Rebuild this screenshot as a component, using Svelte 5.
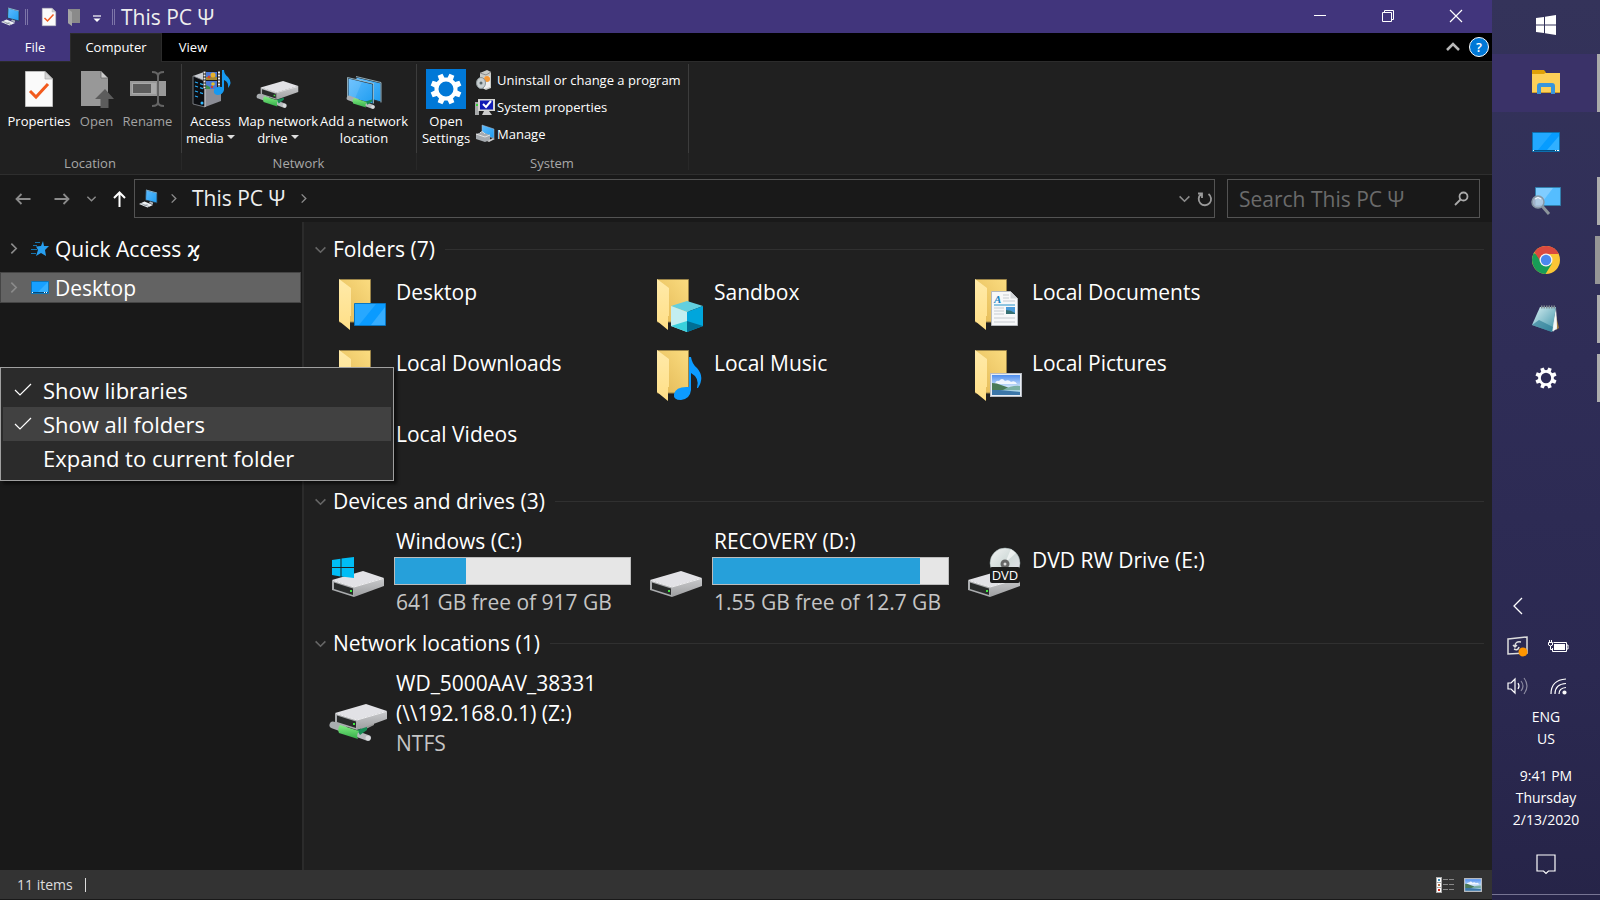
<script>
  const folders = [
    { name: 'Desktop', kind: 'desktop' },
    { name: 'Sandbox', kind: 'cube' },
    { name: 'Local Documents', kind: 'doc' },
    { name: 'Local Downloads', kind: 'plain' },
    { name: 'Local Music', kind: 'music' },
    { name: 'Local Pictures', kind: 'picture' },
    { name: 'Local Videos', kind: 'plain' }
  ];
  const drives = [
    { name: 'Windows (C:)', free: '641 GB free of 917 GB', used: 30, kind: 'windows' },
    { name: 'RECOVERY (D:)', free: '1.55 GB free of 12.7 GB', used: 88, kind: 'plain' },
    { name: 'DVD RW Drive (E:)', kind: 'dvd' }
  ];
  const menu = [
    { label: 'Show libraries', checked: true },
    { label: 'Show all folders', checked: true, hover: true },
    { label: 'Expand to current folder', checked: false }
  ];
  const apps = [
    { id: 'explorer', label: 'File Explorer', state: 'active' },
    { id: 'desktop', label: 'Desktop', state: '' },
    { id: 'finder', label: 'Screen search', state: 'running' },
    { id: 'chrome', label: 'Chrome', state: 'running multi' },
    { id: 'notepad', label: 'Notepad', state: 'running' },
    { id: 'settings', label: 'Settings', state: 'running' }
  ];
  const teeth = [0, 45, 90, 135, 180, 225, 270, 315];
</script>

{#snippet pc(w)}
  <svg width={w} height={w} viewBox="0 0 20 20" aria-hidden="true">
    <path d="M8 1l11 3v10L7.500 11z" fill="url(#screen)" stroke="#2b3a48" stroke-width=".8" />
    <path d="M8 1l11 3" stroke="#a9dcf8" stroke-width=".7" />
    <path d="M12 12.500l3 1v2l-4-1.500z" fill="#aab3bd" />
    <path d="M1 15l5.500-2.500L15 16l-5.500 2.500z" fill="#eef1f4" />
    <path d="M3 14.500l8 3M9.500 15.500l-3.500 1.500" stroke="#7e8791" stroke-width=".7" />
  </svg>
{/snippet}

{#snippet gear(w)}
  <svg width={w} height={w} viewBox="0 0 32 32" aria-hidden="true">
    {#each teeth as a}
      <path d="M13 6.500l.4-6h5.200l.4 6z" fill="#fff" transform={`rotate(${a + 22.5} 16 16)`} />
    {/each}
    <circle cx="16" cy="16" r="9.500" fill="none" stroke="#fff" stroke-width="4" />
  </svg>
{/snippet}

{#snippet chevron(dir, w)}
  <svg width={w} height={w} viewBox="0 0 12 12" fill="none" stroke="currentColor" stroke-width="1.500" aria-hidden="true">
    {#if dir === 'right'}<path d="M4 1.500L8.500 6 4 10.500" />
    {:else}<path d="M1.500 4L6 8.500 10.500 4" />{/if}
  </svg>
{/snippet}

{#snippet checkPage(w, h)}
  <svg width={w} height={h} viewBox="0 0 28 36" aria-hidden="true">
    <path d="M.5.5H20l7.500 7.500v27.500H.5z" fill="#fafafa" stroke="#bbb" />
    <path d="M20 .5V8h7.500z" fill="#d4d4d4" stroke="#aaa" stroke-width=".7" />
    <path d="M5 20l6 6L23 13" fill="none" stroke="#f25a1d" stroke-width="3" />
  </svg>
{/snippet}

{#snippet landscape()}
  <rect x=".5" y=".5" width="31" height="23" fill="#e8edf3" stroke="#b9bdc4" />
  <rect x="2" y="2" width="28" height="20" fill="url(#sky)" />
  <path d="M5 11q1-4 4-3 3-4 6 0 4-2 6 1 4-2 6 2z" fill="#fff" opacity=".85" />
  <path d="M2 10q5 0 9 2 7 2 12 5H2z" fill="#4a7a58" />
  <path d="M13 17q9-5 17-4v4z" fill="#7bb0a5" />
  <path d="M2 17h28v5H2z" fill="#3b76a8" /><path d="M10 17h20v2z" fill="#a9d2e2" />
{/snippet}

{#snippet driveShape()}
  <path d="M0 23l31-9 21 7-30 9z" fill="#e2e2e6" />
  <path d="M22 30l30-9v8L22 40z" fill="url(#side)" />
  <path d="M0 23l22 7v10L0 33z" fill="#aaacae" />
  <path d="M2 25.500l19 6v6.500L2 32z" fill="#292b2b" />
  <path d="M1 23.500l21 6.500 29-8.500" fill="none" stroke="#f1f1f3" stroke-width="1" />
  <rect x="18" y="33" width="2" height="2" fill="#3ee93e" />
{/snippet}

{#snippet cable()}
  <path d="M3 3l11 4" stroke="#a9adb0" stroke-width="7" stroke-linecap="round" />
  <path d="M27 12l11 4" stroke="#b7babd" stroke-width="6" stroke-linecap="round" />
  <path d="M27 8l10-3v3l-7 5z" fill="#178c55" />
  <path d="M10 3l19 6q-3 4-1 8L9 11q-2-4 1-8z" fill="url(#green)" />
  <circle cx="38" cy="16" r="2.500" fill="#d9dbdd" />
{/snippet}

<svg class="defs" width="0" height="0" aria-hidden="true">
  <defs>
    <linearGradient id="screen" x1="0" y1="0" x2="1" y2="1"><stop offset="0" stop-color="#5fbcff" /><stop offset="1" stop-color="#1f9df0" /></linearGradient>
    <linearGradient id="back" x1="0" y1="1" x2="1" y2="0"><stop offset="0" stop-color="#e2b855" /><stop offset="1" stop-color="#fbdc80" /></linearGradient>
    <linearGradient id="flap" x1="0" y1="0" x2="0" y2="1"><stop offset="0" stop-color="#ffeaa9" /><stop offset="1" stop-color="#ffdf87" /></linearGradient>
    <linearGradient id="side" x1="0" y1="0" x2="0" y2="1"><stop offset="0" stop-color="#c9cacc" /><stop offset="1" stop-color="#9d9ea0" /></linearGradient>
    <linearGradient id="green" x1="0" y1="0" x2="0" y2="1"><stop offset="0" stop-color="#82ee83" /><stop offset="1" stop-color="#34ad48" /></linearGradient>
    <linearGradient id="sky" x1="0" y1="0" x2="0" y2="1"><stop offset="0" stop-color="#4f8ff0" /><stop offset=".7" stop-color="#e5f2fb" /></linearGradient>
    <linearGradient id="pad" x1="0" y1="0" x2="1" y2="1"><stop offset="0" stop-color="#d9f0f3" /><stop offset="1" stop-color="#3d93a8" /></linearGradient>
    <linearGradient id="disc" x1="0" y1="0" x2="1" y2="1"><stop offset="0" stop-color="#f4f4f4" /><stop offset=".5" stop-color="#cfdad8" /><stop offset="1" stop-color="#e9e3ee" /></linearGradient>
  </defs>
</svg>

<div class="screen">
  <main class="window">
    <header class="titlebar">
      {@render pc(20)}
      <i class="sep"></i>
      <button class="quick first" aria-label="Properties">{@render checkPage(14, 18)}</button>
      <button class="quick" aria-label="New folder">
        <svg width="13" height="18" viewBox="0 0 13 18"><path d="M0 1h12v14H4v3L0 15z" fill="#8a8a8a" /><path d="M0 1l4 3v14l-4-3z" fill="#a5a5a5" /></svg>
      </button>
      <button class="quick last" aria-label="Customize toolbar">
        <svg width="8" height="8" viewBox="0 0 8 8"><path d="M0 1h8" stroke="#fff" stroke-width="1.200" /><path d="M.5 3.500h7L4 7z" fill="#fff" /></svg>
      </button>
      <i class="sep"></i>
      <h1>This PC Ψ</h1>
      <div class="controls">
        <button aria-label="Minimize"><svg width="12" height="12"><path d="M0 5.500h12" stroke="#fff" /></svg></button>
        <button aria-label="Restore"><svg width="12" height="12" fill="none" stroke="#fff"><path d="M.5 2.500h9v9h-9zM2.500 2.500v-2h9v9h-2" /></svg></button>
        <button aria-label="Close"><svg width="12" height="12" stroke="#fff" stroke-width="1.200"><path d="M0 0l12 12M12 0L0 12" /></svg></button>
      </div>
    </header>

    <nav class="tabs" aria-label="Ribbon tabs">
      <button class="file">File</button>
      <button class="current">Computer</button>
      <button class="view">View</button>
      <span class="grow"></span>
      <button class="collapse" aria-label="Collapse ribbon">
        <svg width="14" height="10" viewBox="0 0 14 10"><path d="M1 8l6-6 6 6" fill="none" stroke="#b8b8b8" stroke-width="2.500" /></svg>
      </button>
      <button class="help" aria-label="Help">?</button>
    </nav>

    <section class="ribbon">
      <div class="group location">
        <div class="tools">
          <button class="tool props">{@render checkPage(28, 36)}<span>Properties</span></button>
          <button class="tool open dim">
            <svg width="34" height="38" viewBox="0 0 34 38"><path d="M1 1h20l7 7v28H1z" fill="#989898" /><path d="M21 1v7h7z" fill="#ccc" stroke="#666" stroke-width=".7" /><path d="M20.500 38V29H15l10-10 9 10h-5.500v9z" fill="#5c5c5c" /></svg>
            <span>Open</span>
          </button>
          <button class="tool rename dim">
            <svg width="36" height="36" viewBox="0 0 36 36"><path d="M0 10h36v15H0z" fill="#999" /><path d="M2 12h24v11H2z" fill="#a9a9a9" /><path d="M3 13h18v9H3z" fill="#5d5d5d" /><path d="M22 1q6 0 6 4v26q0 4-6 4M34 1q-6 0-6 4M34 35q-6 0-6-4" fill="none" stroke="#646464" stroke-width="2" /></svg>
            <span>Rename</span>
          </button>
        </div>
        <h2>Location</h2>
      </div>
      <div class="group network">
        <div class="tools">
          <button class="tool access">
            <svg width="40" height="38" viewBox="0 0 40 38">
              <path d="M2 6l11-4 17 4-16 5z" fill="#c9ccd1" /><path d="M2 6l12 5v26L2 34z" fill="#0c0e12" stroke="#8b8f96" stroke-width=".8" /><path d="M14 11l16-5v25l-16 6z" fill="#8b8d95" /><path d="M14 11v26" stroke="#d0d2d6" />
              <path d="M4 12l3 1m2 .7l3 1M4 16l3 1m2 .7l3 1M4 21l3 1m2 .7l3 1M4 26l3 1" stroke="#28a8f0" stroke-width="1.300" /><circle cx="11" cy="33" r="1.500" fill="#31b8ff" />
              <path d="M12 1h18v18H12z" fill="#1b1b1b" /><path d="M15 2h11v8H15zM15 11h11v8H15z" fill="#4a78d6" /><path d="M15 7h11v3H15z" fill="#a58a35" /><circle cx="22" cy="5" r="2.500" fill="#e8b22c" /><circle cx="18" cy="7" r="1.500" fill="#d8452c" /><circle cx="22" cy="14" r="1.800" fill="#e3c22e" /><path d="M15 15l4 2v2h-4z" fill="#3c8f46" /><circle cx="21" cy="17" r="1.200" fill="#d23f2d" />
              <path d="M13.500 1.500v17M28 1.500v17" stroke="#eee" stroke-width="2" stroke-dasharray="2 1" />
              <path d="M31 0h2q0 4 4 7 5 6 0 11 1-6-4-8v10q-1 5-7 5-4-1-3-5 2-4 8-3z" fill="#1699f0" />
            </svg>
            <span>Access<br />media <b class="caret"></b></span>
          </button>
          <button class="tool map">
            <svg width="42" height="38" viewBox="0 0 58 50"><g transform="translate(5 0)">{@render driveShape()}</g><g transform="translate(0 32)">{@render cable()}</g></svg>
            <span>Map network<br />drive <b class="caret"></b></span>
          </button>
          <button class="tool add">
            <svg width="36" height="38" viewBox="0 0 36 38"><path d="M10 7l25 6v19l-25-7z" fill="url(#screen)" stroke="#262f36" /><path d="M10 6.500l25 6v20" fill="none" stroke="#a9cad8" stroke-width=".8" /><path d="M2 8l25 6v20L2 27z" fill="url(#screen)" stroke="#262f36" /><path d="M1.500 27V7.500l26 6v20" fill="none" stroke="#a9cad8" stroke-width=".8" /><path d="M16 12L9 28.500 2.500 27V8.500z" fill="#fff" opacity=".12" /><g transform="translate(1 26) scale(.68)">{@render cable()}</g></svg>
            <span>Add a network<br />location</span>
          </button>
        </div>
        <h2>Network</h2>
      </div>
      <div class="group system">
        <div class="tools">
          <button class="tool settings"><i class="tile">{@render gear(32)}</i><span>Open<br />Settings</span></button>
          <div class="links">
            <button>
              <svg width="20" height="20" viewBox="0 0 20 20"><path d="M5 3l7-3 4 2v16l-5 2-6-3z" fill="#c9cbc7" /><path d="M5 3l6 2 5-3" fill="none" stroke="#8b8b8b" /><path d="M9 7l6-1v11l-6 2z" fill="#eee" /><circle cx="12" cy="9" r="3" fill="#f49836" /><ellipse cx="6" cy="13" rx="4.500" ry="5.500" fill="#c7ced0" stroke="#8a9496" /><circle cx="6" cy="13" r="1.500" fill="#596669" /></svg>
              Uninstall or change a program
            </button>
            <button>
              <svg width="20" height="20" viewBox="0 0 20 20"><path d="M0 5h4v13H0z" fill="#a8aaab" /><path d="M1 8h3" stroke="#36d536" stroke-width="2" /><path d="M3 2h17v12H3z" fill="#d6d6d2" /><path d="M5 3.500h13v9H5z" fill="#101bb5" /><path d="M9 14h5l3 4H7z" fill="#ccc" /><path d="M8 7l3 3 5-6" fill="none" stroke="#fff" stroke-width="2" /></svg>
              System properties
            </button>
            <button>
              <svg width="20" height="20" viewBox="0 0 20 20"><path d="M7 1l12 4v9L7 11z" fill="url(#screen)" stroke="#abc" stroke-width=".5" /><path d="M1 10l6-2 8 3v5l-5 2-9-3z" fill="#a6abb0" /><path d="M1 10l9 3 5-2" stroke="#e4e4e4" fill="none" /><path d="M5 9q2-3 5 1" stroke="#ddd" fill="none" /><path d="M12 17l6-3 2 1-6 3z" fill="#ccc" /></svg>
              Manage
            </button>
          </div>
        </div>
        <h2>System</h2>
      </div>
    </section>

    <div class="address">
      <div class="history">
        <button aria-label="Back"><svg width="16" height="12" viewBox="0 0 16 12" fill="none" stroke="#8b8b8b" stroke-width="1.800"><path d="M15.500 6H1.500M6.500 1l-5 5 5 5" /></svg></button>
        <button class="forward" aria-label="Forward"><svg width="16" height="12" viewBox="0 0 16 12" fill="none" stroke="#8b8b8b" stroke-width="1.800"><path d="M.5 6h14M9.500 1l5 5-5 5" /></svg></button>
        <button aria-label="Recent locations">{@render chevron('down', 11)}</button>
        <button aria-label="Up"><svg width="13" height="16" viewBox="0 0 13 16" fill="none" stroke="#fff" stroke-width="2"><path d="M6.500 16V1.500M1 7l5.500-5.500L12 7" /></svg></button>
      </div>
      <div class="path">
        {@render pc(20)}
        <span class="crumb">{@render chevron('right', 11)}</span>
        <button class="here">This PC Ψ</button>
        {@render chevron('right', 11)}
        <span class="grow"></span>
        <button aria-label="Previous locations">{@render chevron('down', 13)}</button>
        <button class="refresh" aria-label="Refresh"><svg width="16" height="16" viewBox="0 0 16 16" fill="none" stroke="#9a9a9a" stroke-width="1.800"><path d="M11.500 3A6.200 6.200 0 1 1 4 3.200M1 2.500h4v4.500" /></svg></button>
      </div>
      <label class="search">
        <input type="search" placeholder="Search This PC Ψ" aria-label="Search This PC" />
        <svg width="15" height="15" viewBox="0 0 15 15" fill="none" stroke="#aaa" stroke-width="1.800"><circle cx="9.500" cy="5.500" r="4" /><path d="M6.500 8.500L1 14" /></svg>
      </label>
    </div>

    <div class="body">
      <aside>
        <button class="node">
          {@render chevron('right', 13)}
          <svg width="20" height="18" viewBox="0 0 20 18"><path d="M13 1l1 5h5l-4 4 1 6-5-3-5 3 2-6-2-3.500 5-.5z" fill="#279ff0" /><path d="M5 2.500h5M3 5.500h4M1 9.500h6M1 13.500h5" stroke="#1673ad" /></svg>
          <span>Quick Access <b class="kai">ϗ</b></span>
        </button>
        <button class="node selected">
          {@render chevron('right', 13)}
          <svg width="20" height="18" viewBox="0 0 20 18"><path d="M1.500 2.500h17v12h-17z" fill="#17a0ff" stroke="#0d76b8" /><path d="M18 3v11H7z" fill="#35b0ff" /><path d="M2 13.500h16" stroke="#064a78" /><path d="M2 13.500h1M14 13.500h1M16 13.500h1" stroke="#fff" /></svg>
          <span>Desktop</span>
        </button>
        <div class="menu" role="menu">
          {#each menu as item}
            <button role="menuitemcheckbox" aria-checked={item.checked} class:hover={item.hover}>
              <svg width="18" height="14" viewBox="0 0 18 14">{#if item.checked}<path d="M1 7l5 5L17 1" fill="none" stroke="#fff" stroke-width="1.200" />{/if}</svg>
              {item.label}
            </button>
          {/each}
        </div>
      </aside>

      <div class="content">
        <h3>{@render chevron('down', 13)}<span>Folders (7)</span></h3>
        <div class="grid">
          {#each folders as f}
            <a class="item folder" href="#{f.kind}">
              <svg width="50" height="54" viewBox="0 0 50 54" aria-hidden="true">
                <path d="M.5.500h31V43H.5z" fill="url(#back)" stroke="#9b8448" />
                <path d="M0 0l12 9v28h-1v14L0 42z" fill="url(#flap)" />
                {#if f.kind === 'desktop'}
                  <path d="M15.500 24.500h31v22h-31z" fill="#0a9bff" stroke="#0875c1" /><path d="M16 25h21L20 46h-4z" fill="#27a8ff" /><path d="M46 28v18H32z" fill="#35adff" />
                {:else if f.kind === 'cube'}
                  <path d="M30 22l16 5-16 6-16-6z" fill="#62cfdf" /><path d="M14 27l16 6v20l-16-6z" fill="#c3eef0" /><path d="M46 27l-16 6v20l16-6z" fill="#00a6dc" /><path d="M14 47l16-5v11z" fill="#3ad0dc" /><path d="M46 47l-16-5v11z" fill="#016f94" />
                {:else if f.kind === 'doc'}
                  <path d="M16.500 12.500h19l7 7v27h-26z" fill="#f7f8f9" stroke="#b5b9bd" /><path d="M35.500 12.500v7h7z" fill="#d3d6d9" />
                  <text x="19" y="24" class="docletter">A</text>
                  <path d="M28 16h6M28 19h6M28 22h12M19 29h10M19 32h10M19 35h10M19 39h21M19 43h21" stroke="#c6cbd0" /><path d="M19 26h21" stroke="#2792c8" /><path d="M31 28h9v7h-9z" fill="#4b9bd9" /><path d="M31 31q5 0 9 3v1h-9z" fill="#356f72" />
                {:else if f.kind === 'music'}
                  <path d="M32 7h2q1 7 6 11 8 9 1 20h-1q3-10-6-15v17q-1 9-10 10-8 0-7-6 2-8 15-7z" fill="#0c9bff" />
                {:else if f.kind === 'picture'}
                  <g transform="translate(15 23)">{@render landscape()}</g>
                {/if}
              </svg>
              <span>{f.name}</span>
            </a>
          {/each}
        </div>

        <h3>{@render chevron('down', 13)}<span>Devices and drives (3)</span></h3>
        <div class="grid">
          {#each drives as d}
            <a class="item drive" class:single={!d.free} href="#{d.kind}">
              <svg width="54" height="42" viewBox="0 0 54 42" aria-hidden="true">
                {@render driveShape()}
                {#if d.kind === 'windows'}
                  <path d="M0 3l8.500-1.200V10H0zM9.500 1.500L22 0v10H9.500zM0 11h8.500v8.500L0 18zM9.500 11H22v10L9.500 19.500z" fill="#00bdf5" />
                {:else if d.kind === 'dvd'}
                  <circle cx="37" cy="6" r="15" fill="url(#disc)" stroke="#9aa" stroke-width=".5" /><path d="M37 6l6-14 5 4z" fill="#fff" opacity=".6" /><circle cx="37" cy="7" r="4.500" fill="#666" /><circle cx="37" cy="7" r="1.500" fill="#ddd" />
                  <rect x="22" y="10" width="30" height="16" rx="2" fill="#1c1c1c" /><text x="37" y="23" class="dvd">DVD</text>
                {/if}
              </svg>
              <div>
                <span>{d.name}</span>
                {#if d.free}
                  <div class="meter"><i style:width="{d.used}%"></i></div>
                  <small>{d.free}</small>
                {/if}
              </div>
            </a>
          {/each}
        </div>

        <h3 class="net">{@render chevron('down', 13)}<span>Network locations (1)</span></h3>
        <div class="grid">
          <a class="item share" href="#share">
            <svg width="58" height="44" viewBox="0 0 58 44" aria-hidden="true"><path d="M28 20l16-4v6l-12 6z" fill="#999" /><g transform="translate(5 -13)">{@render driveShape()}</g><g transform="translate(0 19)">{@render cable()}</g></svg>
            <div><span>WD_5000AAV_38331</span><span>(\\192.168.0.1) (Z:)</span><small>NTFS</small></div>
          </a>
        </div>
      </div>
    </div>

    <footer>
      <span>11 items</span><i></i>
      <span class="grow"></span>
      <button aria-label="Details view">
        <svg width="18" height="16" viewBox="0 0 18 16"><path d="M0 0h6v16H0z" fill="#aaa" /><path d="M1 1h4v4H1zM1 6h4v4H1zM1 11h4v4H1z" fill="#fff" /><path d="M2 2h2v2H2z" fill="#3d8db5" /><path d="M2 7h2v2H2z" fill="#b37147" /><path d="M2 12h2v2H2z" fill="#d62a18" /><path d="M7 2.500h5m1 0h5M7 7.500h5m1 0h5M7 12.500h5m1 0h5" stroke="#888" /></svg>
      </button>
      <button aria-label="Large icons view"><svg width="18" height="14" viewBox="0 0 32 24" preserveAspectRatio="none">{@render landscape()}</svg></button>
    </footer>
  </main>

  <aside class="taskbar">
    <button class="start" aria-label="Start">
      <svg width="20" height="20" viewBox="0 0 20 20"><path d="M0 3l8-1v7.500H0zM9 1.800L20 0v9.500H9zM0 10.500h8V18l-8-1zM9 10.500h11V20L9 18.200z" fill="#fff" /></svg>
    </button>
    {#each apps as app}
      <button class="app {app.state}" aria-label={app.label}>
        {#if app.id === 'explorer'}
          <svg width="28" height="24" viewBox="0 0 28 24"><path d="M0 3h28v20H0z" fill="#fdcf58" /><path d="M0 0h12l2 2.500L12 4H0z" fill="#e0a008" /><path d="M0 22.500h28" stroke="#cf9f2b" /><path d="M5 24V16q0-3 3-3h12q3 0 3 3v8h-4v-7H9v7z" fill="#3995dd" /></svg>
        {:else if app.id === 'desktop'}
          <svg width="28" height="20" viewBox="0 0 28 20"><path d="M.5.500h27v19H.500z" fill="#079cff" stroke="#0d6fae" /><path d="M1 1h19L6 18H1z" fill="#22a8ff" /><path d="M27 4v14H15z" fill="#30b0ff" /><path d="M1 18.500h26" stroke="#064f83" /><path d="M1 18.500h1M23 18.500h1m1 0h2" stroke="#fff" /></svg>
        {:else if app.id === 'finder'}
          <svg width="30" height="28" viewBox="0 0 30 28"><path d="M4.500.500h25v18h-25z" fill="#55bdff" stroke="#327fac" /><path d="M5 1h17L9 18H5z" fill="#80cdff" /><path d="M11 19l7 8" stroke="#8c949b" stroke-width="3" /><circle cx="7" cy="15" r="6" fill="#b8c9dd" fill-opacity=".85" stroke="#8797a4" stroke-width="1.500" /><path d="M4 12q3-3 6 0" stroke="#fff" fill="none" /></svg>
        {:else if app.id === 'chrome'}
          <svg width="28" height="28" viewBox="0 0 28 28"><circle cx="14" cy="14" r="14" fill="#fbc635" /><path d="M1.900 7A14 14 0 0 0 13.500 28L20 17.500l-7 1.500z" fill="#189d57" /><path d="M1.900 7L9 18l4 3 3-6z" fill="#189d57" /><path d="M2.400 6.200L8.300 15 14 8h12.700A14 14 0 0 0 2.400 6.200z" fill="#db4a3f" /><circle cx="14" cy="14" r="6.500" fill="#f4f4f4" /><circle cx="14" cy="14" r="5.200" fill="#4a88ee" /></svg>
        {:else if app.id === 'notepad'}
          <svg width="28" height="28" viewBox="0 0 28 28"><path d="M22 2l5 21-3 2z" fill="#a17a3d" /><path d="M24 3l1 21-6 3z" fill="#dfe9e8" /><path d="M8 2h16l-4 25L0 20z" fill="url(#pad)" /><path d="M0 20l7-5 14 7-1 5z" fill="#277892" opacity=".6" /><path d="M9 2h15" stroke="#808b91" stroke-width="3" stroke-dasharray="1.500 1" /><path d="M24 5l-3 22 4-5z" fill="#fff" opacity=".7" /></svg>
        {:else}
          {@render gear(22)}
        {/if}
      </button>
    {/each}
    <span class="grow"></span>
    <div class="tray">
      <button aria-label="Show hidden icons"><svg width="10" height="18" viewBox="0 0 10 18" fill="none" stroke="#fff" stroke-width="1.300"><path d="M9 1L1 9l8 8" /></svg></button>
      <span></span>
      <button aria-label="Updates"><svg width="22" height="20" viewBox="0 0 22 20" fill="none" stroke="#ddd" stroke-width="1.500"><path d="M1 3l19-2v16L1 18z" /><path d="M14 6q-6-1-6 4M6 9l2 2 2-2M7 13q4 2 5-2" /><circle cx="16" cy="16" r="4.500" fill="#ff9500" stroke="none" /></svg></button>
      <button aria-label="Battery"><svg width="20" height="13" viewBox="0 0 20 13"><path d="M5.500 2.500h13v9h-14V8M18.500 5H20v4h-1.500" fill="none" stroke="#fff" /><path d="M6 4h11v6H6z" fill="#fff" /><path d="M.5 2.500h4V5q-2 2-4 0zM1.500 0v2.500M3.500 0v2.500M2.500 6v3.500h2" fill="none" stroke="#fff" /></svg></button>
      <button aria-label="Volume"><svg width="22" height="18" viewBox="0 0 22 18" fill="none" stroke="#fff" stroke-width="1.200"><path d="M1 6h3l4-4v14l-4-4H1zM11 6q2 3 0 6" /><path d="M14 4q4 5 0 10M17 1q6 8 0 16" opacity=".45" /></svg></button>
      <button aria-label="Wi-Fi"><svg width="17" height="17" viewBox="0 0 17 17" fill="none" stroke="#fff" stroke-width="1.200"><path d="M1 16Q1 2 16 1M5 16Q5 6 16 5.500M9 16q0-6 7-6.500" /><circle cx="14.500" cy="14.500" r="1.500" fill="#fff" /></svg></button>
    </div>
    <button class="lang">ENG<br />US</button>
    <button class="clock">9:41 PM<br />Thursday<br />2/13/2020</button>
    <button class="notify" aria-label="Notifications"><svg width="20" height="21" viewBox="0 0 20 21" fill="none" stroke="#fff" stroke-width="1.200"><path d="M1 1h18v16h-6.500L10 19.500 7.500 17H1z" /></svg></button>
  </aside>
</div>

<style>
  :global(body) { margin: 0; background: #202020; }
  .screen {
    display: grid; grid-template-columns: minmax(0, 1fr) 108px; min-height: 100vh;
    font-family: "Open Sans", "Noto Sans", "DejaVu Sans", sans-serif; font-size: 13px; color: #fff;
  }
  .defs { position: absolute; }
  button { font: inherit; color: inherit; background: none; border: 0; padding: 0; margin: 0; }
  svg { flex: none; overflow: visible; }
  h1, h2, h3 { margin: 0; font-weight: 400; }
  .grow { flex: 1; }
  .window { display: flex; flex-direction: column; min-width: 0; background: #191919; }

  .titlebar { display: flex; align-items: center; height: 33px; background: #41357c; }
  .sep { width: 1px; height: 16px; margin-left: 5px; border: 1px solid #7d75a8; border-width: 0 1px; }
  .quick { display: flex; margin-left: 12px; }
  .quick.first { margin-left: 14px; }
  .quick.last { margin: 4px 6px 0 12px; }
  h1 { margin-left: 6px; font-size: 21px; line-height: 30px; color: #eee; }
  .controls { display: flex; margin: 0 2px 2px auto; height: 31px; }
  .controls button { width: 68px; display: grid; place-items: center; }

  .tabs { display: flex; align-items: stretch; height: 28px; background: #000; border-bottom: 1px solid #2b2b2b; }
  .tabs .file { width: 70px; background: #41357c; }
  .tabs .current { width: 92px; margin-bottom: -1px; padding-bottom: 2px; background: #202020; border: 1px solid #2b2b2b; border-bottom: 0; box-sizing: border-box; }
  .tabs .view { width: 62px; }
  .tabs .collapse { margin-right: 9px; }
  .tabs .help { align-self: center; width: 20px; height: 20px; margin-right: 3px; border-radius: 50%; border: 1px solid #fff; background: #0078d7; font-weight: 600; line-height: 17px; }

  .ribbon { display: flex; height: 112px; background: #202020; border-bottom: 1px solid #2e2e2e; }
  .group { display: flex; flex-direction: column; padding-top: 6px; box-sizing: border-box; margin-top: 2px; background: linear-gradient(#3c3c3c 89px, #282828 89px 106px, transparent 106px) right / 1px 100% no-repeat; }
  .location { width: 182px; }
  .network { width: 235px; }
  .system { width: 272px; }
  .tools { display: flex; flex: 1; min-height: 0; }
  .tool { display: flex; flex-direction: column; align-items: center; align-self: flex-start; line-height: 17px; white-space: nowrap; }
  .tool > :global(svg) { height: 38px; }
  .tool span { margin-top: 5px; }
  .dim { color: #a3a3a3; }
  .props { width: 78px; }
  .open { width: 37px; }
  .rename { width: 65px; }
  .access { width: 57px; }
  .map { width: 78px; }
  .add { width: 94px; }
  .settings { width: 58px; }
  .tile { display: grid; place-items: center; width: 40px; height: 40px; margin: -1px 0; background: #0078d7; }
  .caret { display: inline-block; border: 4px solid transparent; border-top-color: #ddd; border-bottom: 0; vertical-align: 4px; }
  .ribbon h2 { text-align: center; font-size: 13px; line-height: 21px; padding-right: 2px; color: #a8a8a8; }
  .links { display: flex; flex-direction: column; margin-top: -4px; }
  .links button { display: flex; align-items: center; gap: 2px; height: 27px; white-space: nowrap; }

  .address { display: flex; align-items: stretch; gap: 10px; padding: 4px 12px 4px 0; height: 39px; color: #8b8b8b; }
  .history { display: flex; align-items: center; gap: 16px; padding-left: 15px; width: 109px; }
  .history .forward { margin-left: 7px; }
  .history button, .path button { display: flex; }
  .path { flex: 1; display: flex; align-items: center; border: 1px solid #535353; padding: 0 1px 0 3px; margin-right: 2px; }
  .crumb { display: flex; margin: 0 13px 0 10px; }
  .path .here { font-size: 21px; line-height: 30px; padding-bottom: 2px; margin-right: 13px; color: #eee; }
  .refresh { margin-left: 6px; }
  .search { display: flex; align-items: center; width: 251px; border: 1px solid #535353; }
  .search input { flex: 1; min-width: 0; padding: 0 0 0 11px; border: 0; outline: 0; background: none; font: inherit; font-size: 21px; color: #fff; }
  .search input::placeholder { color: #6b6b6b; opacity: 1; }
  .search svg { margin-right: 10px; }

  .body { flex: 1; display: grid; grid-template-columns: 302px minmax(0, 1fr); font-size: 21px; }
  .body > aside { position: relative; padding-top: 11px; }
  .node { display: flex; align-items: center; width: 301px; height: 31px; padding-left: 6px; box-sizing: border-box; border: 1px solid transparent; color: #fff; line-height: 28px; white-space: nowrap; margin-bottom: 8px; }
  .node > :global(svg:first-child) { color: #8b8b8b; margin-right: 10px; }
  .node span { margin-left: 5px; }
  .kai { font-family: "DejaVu Sans", sans-serif; font-weight: 400; line-height: 20px; }
  .node.selected { background: #636363; border-color: #454545; }
  .menu { position: absolute; z-index: 2; top: 145px; left: 0; width: 394px; box-sizing: border-box; padding: 5px 2px; background: #2b2b2b; border: 1px solid #a0a0a0; box-shadow: 3px 3px 3px #0008; font-size: 22px; }
  .menu button { display: flex; align-items: center; gap: 11px; width: 100%; height: 34px; padding-left: 11px; }
  .menu .hover { background: #414141; }

  .content { background: #202020; border-left: 2px solid #2b2b2b; padding: 11px 8px 0 10px; }
  h3 { display: flex; align-items: center; height: 32px; margin-bottom: 7px; font-size: 21px; color: #fff; }
  h3 > :global(svg) { color: #666; }
  h3 span { margin: 0 10px 0 6px; padding-bottom: 1px; }
  h3::after { content: ""; flex: 1; height: 1px; background: #303030; }
  h3.net { margin-top: 10px; }
  .grid { display: grid; grid-template-columns: repeat(auto-fill, 318px); padding-left: 16px; }
  .item { display: flex; color: #fff; text-decoration: none; line-height: 30px; }
  .item span, .item small { display: block; white-space: nowrap; }
  .item small { font-size: inherit; color: #c5c5c5; }
  .folder { height: 66px; padding: 5px 0 0 9px; }
  .folder svg { margin-top: 2px; }
  .folder span { margin-left: 7px; }
  .drive { padding: 2px 0 0 2px; }
  .drive > svg { margin-top: 31px; }
  .drive > div { margin-left: 10px; }
  .drive.single span { margin-top: 19px; }
  .meter { width: 235px; height: 26px; margin: 1px 0 2px -2px; border: 1px solid #bcbcbc; background: #e6e6e6; }
  .meter i { display: block; height: 100%; background: #26a0da; }
  .share { padding-top: 2px; }
  .share svg { margin-top: 35px; }
  .share div { margin-left: 8px; }
  .docletter { font: italic 700 11px "Liberation Serif", serif; fill: #1682c2; }
  .dvd { font: 13px "Open Sans", sans-serif; fill: #fff; text-anchor: middle; }

  footer { display: flex; align-items: center; height: 29px; margin-bottom: 1px; padding: 0 10px 0 17px; background: #333; color: #ddd; font-size: 14px; }
  footer i { width: 1px; height: 14px; margin-left: 12px; background: #ddd; }
  footer button { display: flex; margin-left: 10px; }

  .taskbar { display: flex; flex-direction: column; padding-bottom: 5px; box-sizing: border-box; background: linear-gradient(#34335a, #2f2d57 40%, #2b2951 75%, #262448); }
  .taskbar::after { content: ""; height: 1px; background: #777594; }
  .taskbar button { display: grid; place-items: center; font-size: 14px; line-height: 22px; }
  .taskbar .start { height: 50px; margin-bottom: 4px; }
  .taskbar .app { box-sizing: border-box; height: 48px; margin: 6px 0 5px; border-right: 3px solid transparent; border-left: 3px solid transparent; }
  .taskbar .active { height: 58px; margin: 0; background: #3a3268; border-right-color: #aaa; border-left: 0; padding: 0 0 2px 3px; }
  .taskbar .running { border-right-color: #adadad; }
  .taskbar .multi { border-left-width: 5px; border-right-width: 5px; border-right-color: #969696; }
  .tray { display: grid; grid-template-columns: 40px 40px; grid-auto-rows: 40px; justify-content: center; margin-left: -16px; }
  .clock { margin-top: 15px; }
  .notify { height: 22px; margin: 22px 0 19px; }
</style>
